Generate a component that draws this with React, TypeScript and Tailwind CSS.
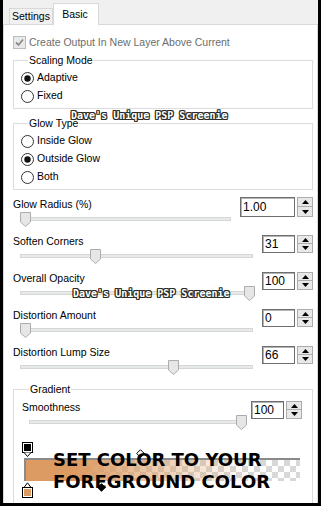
import React from "react";

const ui = "font-['Liberation_Sans',Arial,sans-serif] text-[10.5px] text-black";

function Radio({ on }: { on?: boolean }) {
  return (
    <svg width="13" height="13" viewBox="0 0 13 13">
      <circle cx="6.5" cy="6.5" r="6" fill="#fff" stroke="#333" />
      {on && <circle cx="6.5" cy="6.5" r="3.2" fill="#111" />}
    </svg>
  );
}

function Thumb() {
  return (
    <svg width="11" height="15" viewBox="0 0 11 15">
      <path d="M0.5 0.5H10.5V10L5.5 14.5L0.5 10Z" fill="#e6e6e6" stroke="#acacac" />
    </svg>
  );
}

function Slider({ width, thumb }: { width: number; thumb: number }) {
  return (
    <div className="relative ml-[7px] mt-[2px] h-[16px]" style={{ width }}>
      <div className="absolute left-0 right-0 top-[5px] h-[4px] border border-[#d6d6d6] bg-[#e7eaea]" />
      <div className="absolute top-0" style={{ left: thumb }}>
        <Thumb />
      </div>
    </div>
  );
}

function Spin({ tall }: { tall?: boolean }) {
  const h = tall ? "h-[10px]" : "h-[9px]";
  return (
    <div className="flex w-[16px] flex-col">
      <div className={`${h} flex items-center justify-center border border-[#acacac] bg-[#e8e8e8]`}>
        <svg width="7" height="4" viewBox="0 0 7 4"><path d="M0 4L3.5 0L7 4Z" fill="#000" /></svg>
      </div>
      <div className={`${h} flex items-center justify-center border border-t-0 border-[#acacac] bg-[#e8e8e8]`}>
        <svg width="7" height="4" viewBox="0 0 7 4"><path d="M0 0L7 0L3.5 4Z" fill="#000" /></svg>
      </div>
    </div>
  );
}

function NumBox({ value, wide }: { value: string; wide?: boolean }) {
  return (
    <div className={`flex gap-[2px] ${wide ? "-mt-[1px] -ml-[3px]" : ""}`}>
      <div
        className={`${wide ? "h-[20px] w-[55px]" : "h-[18px] w-[33px]"} flex items-center border border-[#6e6e6e] bg-white pl-[2px] text-[12px] shadow-[inset_1px_1px_0_#b4b4b4]`}
      >
        {value}
      </div>
      <Spin tall={wide} />
    </div>
  );
}

type Row = { label: string; value: string; track: number; thumb: number; wide?: boolean };

const rows: Row[] = [
  { label: "Glow Radius (%)", value: "1.00", track: 211, thumb: 0, wide: true },
  { label: "Soften Corners", value: "31", track: 233, thumb: 70 },
  { label: "Overall Opacity", value: "100", track: 233, thumb: 224 },
  { label: "Distortion Amount", value: "0", track: 233, thumb: 0 },
  { label: "Distortion Lump Size", value: "66", track: 233, thumb: 148 },
];

function Watermark({ x, y }: { x: number; y: number }) {
  return (
    <div
      className="absolute whitespace-nowrap font-['DejaVu_Sans_Mono',monospace] text-[10px] font-bold leading-[10px] text-white [text-shadow:1px_0_#2a2a2a,-1px_0_#2a2a2a,0_1px_#2a2a2a,0_-1px_#2a2a2a,1px_1px_#2a2a2a,-1px_-1px_#2a2a2a,1px_-1px_#2a2a2a,-1px_1px_#2a2a2a]"
      style={{ left: x, top: y }}
    >
      Dave's Unique PSP Screenie
    </div>
  );
}

export default function App() {
  return (
    <div className={`relative flex h-[506px] w-[321px] flex-col border-x-[3px] border-b-[3px] border-black bg-[#f0f0f0] ${ui}`}>
      <div className="flex h-[24px] items-end pl-[6px]">
        <div className="flex h-[16px] w-[44px] items-center justify-center border border-b-0 border-[#d9d9d9]">Settings</div>
        <div className="relative z-10 -mb-px flex h-[22px] w-[46px] items-start justify-center border border-b-0 border-[#d9d9d9] bg-white pt-[3px] pr-[2px]">
          Basic
        </div>
      </div>

      <div className="flex-1 overflow-hidden border border-b-0 border-[#d9d9d9] bg-white">
        <div className="ml-[9px] mt-[11px] flex h-[13px] items-center gap-[3px] text-[#6d6d6d]">
          <svg width="13" height="13" viewBox="0 0 13 13">
            <rect x="0.5" y="0.5" width="12" height="12" fill="#e9e9e9" stroke="#bcbcbc" />
            <path d="M3 6.5L5.5 9L10 3.5" fill="none" stroke="#8d8d8d" strokeWidth="1.8" />
          </svg>
          <span>Create Output In New Layer Above Current</span>
        </div>

        <fieldset className="ml-[9px] mt-[4px] w-[300px] border border-[#dcdcdc] pb-[3px] pl-[7px] pt-[2px]">
          <legend className="ml-[7px] px-[1px] leading-[14px]">Scaling Mode</legend>
          <div className="flex h-[18px] items-center gap-[3px]"><Radio on /><span>Adaptive</span></div>
          <div className="flex h-[18px] items-center gap-[3px]"><Radio /><span>Fixed</span></div>
        </fieldset>

        <fieldset className="ml-[9px] mt-[7px] w-[300px] border border-[#dcdcdc] pb-[3px] pl-[7px] pt-[2px]">
          <legend className="ml-[7px] px-[1px] leading-[14px]">Glow Type</legend>
          <div className="flex h-[18px] items-center gap-[3px]"><Radio /><span>Inside Glow</span></div>
          <div className="flex h-[18px] items-center gap-[3px]"><Radio on /><span>Outside Glow</span></div>
          <div className="flex h-[18px] items-center gap-[3px]"><Radio /><span>Both</span></div>
        </fieldset>

        <div className="mt-[8px] flex flex-col gap-[7px]">
          {rows.map((r) => (
            <div key={r.label} className="ml-[9px] mr-[4px] flex h-[30px]">
              <div>
                <div className="h-[12px] leading-[12px]">{r.label}</div>
                <Slider width={r.track} thumb={r.thumb} />
              </div>
              <div className="ml-auto">
                <NumBox value={r.value} wide={r.wide} />
              </div>
            </div>
          ))}
        </div>

        <fieldset className="ml-[9px] mt-[6px] h-[160px] w-[300px] border border-[#dcdcdc] pl-[8px]">
          <legend className="ml-[7px] px-[1px] leading-[14px]">Gradient</legend>
          <div className="mr-[10px] mt-[5px] flex h-[30px]">
            <div>
              <div className="h-[12px] leading-[12px]">Smoothness</div>
              <Slider width={217} thumb={207} />
            </div>
            <div className="ml-auto">
              <NumBox value="100" />
            </div>
          </div>
          <div className="mt-[11px]">
            <svg width="11" height="15" viewBox="0 0 11 15">
              <rect x="0.5" y="0.5" width="10" height="10" fill="#fff" stroke="#000" />
              <rect x="2" y="2" width="7" height="7" fill="#000" />
              <path d="M2 10.5L5.5 14.5L9 10.5" fill="#fff" stroke="#000" />
            </svg>
          </div>
          <div className="ml-[2px] mt-px h-[23px] w-[276px] border-l-2 border-t-2 border-[#8a8a8a] bg-[repeating-conic-gradient(#d8d8d8_0_25%,#ffffff_0_50%)] bg-[length:12px_12px]">
            <div className="h-full w-full bg-[linear-gradient(to_right,#dc9b63_18%,rgba(220,155,99,0.55)_45%,rgba(220,155,99,0)_82%)]" />
          </div>
          <div className="mt-px">
            <svg width="11" height="16" viewBox="0 0 11 16">
              <path d="M2 5.5L5.5 0.8L9 5.5" fill="#fff" stroke="#000" />
              <rect x="0.5" y="5.5" width="10" height="10" fill="#fff" stroke="#000" />
              <rect x="2" y="7" width="7" height="7" fill="#dc9b63" />
            </svg>
          </div>
        </fieldset>
      </div>

      <Watermark x={68} y={111} />
      <Watermark x={70} y={289} />

      <svg className="absolute left-[133px] top-[449px]" width="9" height="9" viewBox="0 0 9 9">
        <path d="M4.5 0.7L8.3 4.5L4.5 8.3L0.7 4.5Z" fill="#fff" stroke="#000" />
      </svg>
      <svg className="absolute left-[94px] top-[483px]" width="9" height="9" viewBox="0 0 9 9">
        <path d="M4.5 0.7L8.3 4.5L4.5 8.3L0.7 4.5Z" fill="#000" stroke="#000" />
      </svg>

      <div className="absolute left-[50px] top-[449px] font-['DejaVu_Sans',Verdana,sans-serif] text-[18px] font-bold leading-[22px] text-black">
        <div>SET COLOR TO YOUR</div>
        <div>FOREGROUND COLOR</div>
      </div>
    </div>
  );
}
